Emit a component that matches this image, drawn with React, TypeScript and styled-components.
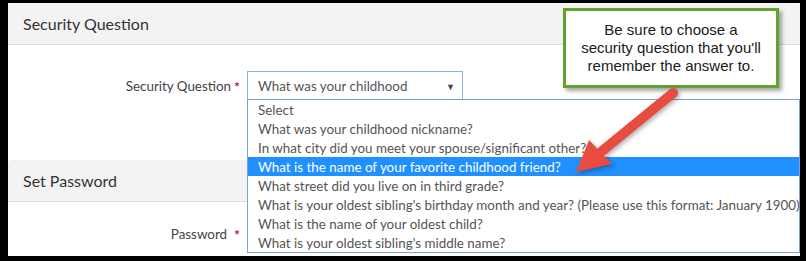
import styled, { createGlobalStyle } from "styled-components";

const QUESTIONS = [
    "Select",
    "What was your childhood nickname?",
    "In what city did you meet your spouse/significant other?",
    "What is the name of your favorite childhood friend?",
    "What street did you live on in third grade?",
    "What is your oldest sibling's birthday month and year? (Please use this format: January 1900)",
    "What is the name of your oldest child?",
    "What is your oldest sibling's middle name?",
];
const SELECTED = 3;

const GlobalStyle = createGlobalStyle`
    html, body {
        margin: 0;
        padding: 0;
        background: #000;
    }
    body {
        font-family: Lato, "Noto Sans", sans-serif;
    }
`;

export default function App() {
    return (
        <>
            <GlobalStyle />
            <Frame>
                <Panel>
                    <SectionHeader>Security Question</SectionHeader>
                    <FormRow $top={26} $bottom={59}>
                        <Label $gap={3}>
                            Security Question<Required>*</Required>
                        </Label>
                        <SelectBox>
                            <span>What was your childhood</span>
                            <Caret>▼</Caret>
                        </SelectBox>
                    </FormRow>

                    <SectionHeader>Set Password</SectionHeader>
                    <FormRow $top={17} $bottom={0}>
                        <Label $gap={7}>
                            Password<Required>*</Required>
                        </Label>
                        <PlainInput />
                    </FormRow>

                    <OptionList>
                        {QUESTIONS.map((q, idx) => (
                            <Option $active={idx === SELECTED} key={idx}>
                                {q}
                            </Option>
                        ))}
                    </OptionList>

                    <Callout>
                        Be sure to choose a<br />
                        security question that you'll
                        <br />
                        remember the answer to.
                    </Callout>

                    <Arrow viewBox="560 85 130 100" width="130" height="100">
                        <line
                            x1="673"
                            y1="93"
                            x2="602"
                            y2="151"
                            stroke="#e84b3f"
                            strokeWidth="10"
                            strokeLinecap="round"
                        />
                        <polygon
                            points="589,140 612,164 576,172"
                            fill="#e84b3f"
                        />
                    </Arrow>
                </Panel>
            </Frame>
        </>
    );
}

const Frame = styled.div`
    width: 806px;
    height: 261px;
    box-sizing: border-box;
    padding: 3px 6px 5px 8px;
    background: #000;
`;

const Panel = styled.div`
    position: relative;
    width: 792px;
    height: 253px;
    background: #fff;
    overflow: hidden;
`;

const SectionHeader = styled.div`
    height: 42px;
    box-sizing: border-box;
    display: flex;
    align-items: center;
    padding-left: 15px;

    background: #f3f3f3;
    border-bottom: 1px solid #dddddd;
    border-radius: 4px 4px 0 0;

    font-size: 16px;
    color: #333;
`;

const FormRow = styled.div<{ $top: number; $bottom: number }>`
    display: flex;
    align-items: center;
    gap: 7px;
    margin: ${({ $top, $bottom }) => `${$top}px 0 ${$bottom}px`};
`;

const Label = styled.div<{ $gap: number }>`
    width: 232px;
    display: flex;
    align-items: center;
    justify-content: flex-end;
    gap: ${({ $gap }) => $gap}px;

    font-size: 13.4px;
    color: #444;
`;

const Required = styled.span`
    color: #d0142c;
    font-size: 14px;
    font-weight: 700;
`;

const SelectBox = styled.div`
    width: 216px;
    height: 30px;
    box-sizing: border-box;
    display: flex;
    align-items: center;
    justify-content: space-between;
    padding: 0 7px 0 10px;

    border: 1px solid #8fb0e6;
    font-size: 13.4px;
    color: #555;
`;

const Caret = styled.span`
    font-size: 9px;
    color: #444;
`;

const PlainInput = styled.div`
    width: 216px;
    height: 30px;
    box-sizing: border-box;
    border: 1px solid #ccc;
`;

const OptionList = styled.div`
    position: absolute;
    top: 96px;
    left: 239px;
    right: 0;
    box-sizing: border-box;
    border: 1px solid #7f9fd9;
    background: #fff;
`;

const Option = styled.div<{ $active?: boolean }>`
    height: 19px;
    line-height: 20px;
    padding-left: 10px;
    white-space: nowrap;

    font-size: 13.4px;
    color: ${({ $active }) => ($active ? "#fff" : "#555")};
    background: ${({ $active }) => ($active ? "#1e90ff" : "transparent")};
`;

const Callout = styled.div`
    position: absolute;
    top: 5px;
    left: 555px;
    width: 216px;
    height: 80px;
    box-sizing: border-box;
    display: flex;
    align-items: center;
    justify-content: center;
    text-align: center;

    background: #fff;
    border: 3px solid #63a12d;
    box-shadow: 3px 3px 4px rgba(0, 0, 0, 0.35);

    font-family: "Liberation Sans", Arial, sans-serif;
    font-size: 15px;
    line-height: 18px;
    color: #1a1a1a;
`;

const Arrow = styled.svg`
    position: absolute;
    top: 82px;
    left: 552px;
    filter: drop-shadow(2px 2px 2px rgba(0, 0, 0, 0.3));
`;
